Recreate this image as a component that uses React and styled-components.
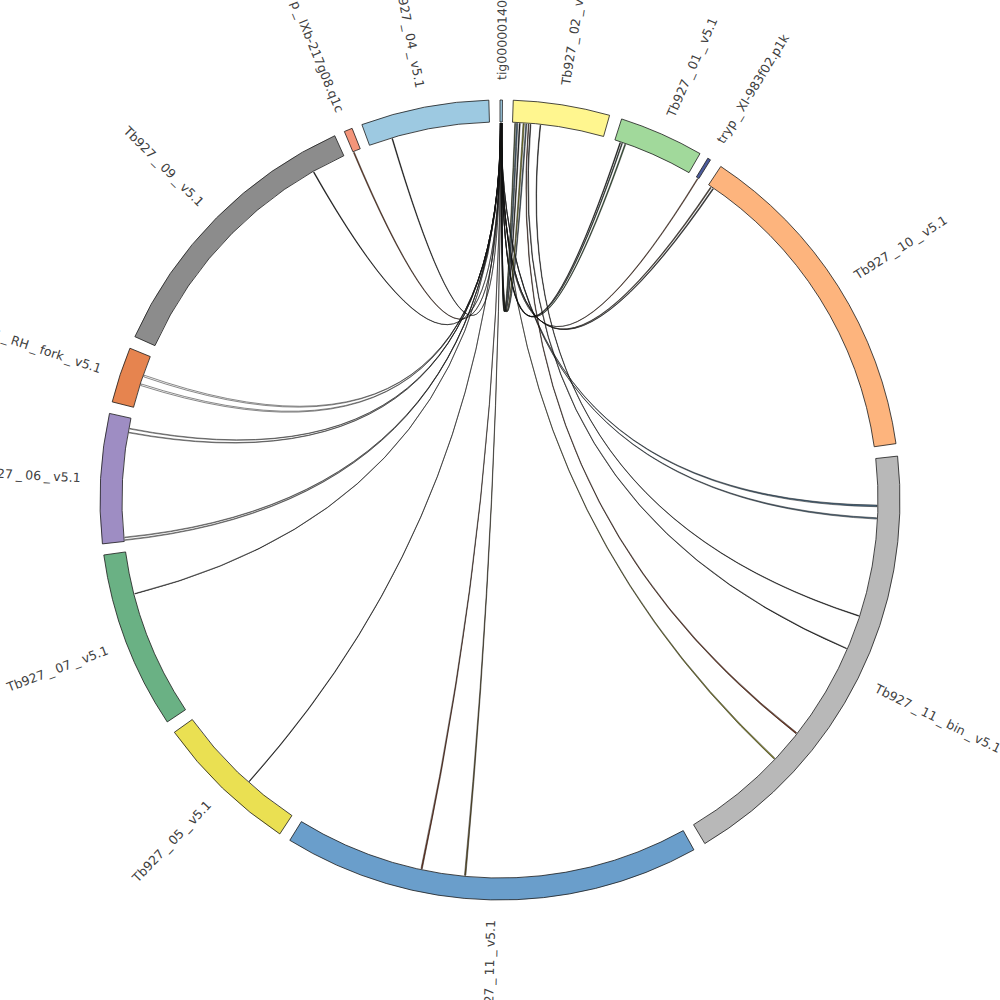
import React from 'react';
import styled, { createGlobalStyle } from 'styled-components';

// circle geometry
const CX = 500;
const CY = 500;
const R_OUT = 400;
const R_IN = 378;
const R_LINK = 377;
const R_LABEL = 420;

const GlobalStyle = createGlobalStyle`
  html, body {
    margin: 0;
    padding: 0;
    background: #ffffff;
  }
`;

const Page = styled.main`
  width: 1000px;
  height: 1000px;
  display: flex;
  align-items: center;
  justify-content: center;
  background: #ffffff;
  overflow: hidden;
`;

const Chart = styled.svg`
  display: block;
  width: 1000px;
  height: 1000px;
`;

const Sector = styled.path`
  fill: ${p => p.$fill};
  stroke: #1a1a1a;
  stroke-width: 0.8;
`;

const Link = styled.path`
  fill: ${p => p.$fill};
  stroke: #111111;
  stroke-width: 0.5;
`;

const Label = styled.text`
  font-family: "DejaVu Sans", "Liberation Sans", sans-serif;
  font-size: 12.5px;
  fill: #404040;
  dominant-baseline: central;
  text-anchor: ${p => (p.$end ? 'end' : 'start')};
`;

// sectors: name, start angle, end angle (degrees clockwise from top), colour
const sectors = [
  { name: 'tig00000140', a1: 0, a2: 0.35, color: '#9ecae1' },
  { name: 'Tb927_02_v5.1', a1: 1.9, a2: 15.9, color: '#fff68f' },
  { name: 'Tb927_01_v5.1', a1: 17.7, a2: 30.0, color: '#a1d99b' },
  { name: 'tryp_XI-983f02.p1k', a1: 31.3, a2: 31.75, color: '#4c5c9c' },
  { name: 'Tb927_10_v5.1', a1: 33.5, a2: 81.9, color: '#fdb47d' },
  { name: 'Tb927_11_bin_v5.1', a1: 83.7, a2: 149.2, color: '#b8b8b8' },
  { name: 'Tb927_11_v5.1', a1: 151.0, a2: 211.7, color: '#6a9ecb' },
  { name: 'Tb927_05_v5.1', a1: 213.4, a2: 234.5, color: '#eae052' },
  { name: 'Tb927_07_v5.1', a1: 236.3, a2: 262.1, color: '#6ab184' },
  { name: 'Tb927_06_v5.1', a1: 263.7, a2: 282.5, color: '#9e8dc3' },
  { name: 'Tb927_RH_fork_v5.1', a1: 284.2, a2: 292.3, color: '#e6844f' },
  { name: 'Tb927_09_v5.1', a1: 294.1, a2: 335.6, color: '#8c8c8c' },
  { name: 'tryp_IXb-217g08.q1c', a1: 337.1, a2: 338.3, color: '#f4957a' },
  { name: 'Tb927_04_v5.1', a1: 339.8, a2: 358.4, color: '#9dc9e1' },
];

// links leaving tig00000140: target angle, target width, fill
const tigLinks = [
  [343.4, 0.12, '#1a1a1a'],
  [337.2, 0.15, '#8b4a2b'],
  [330.4, 0.12, '#1a1a1a'],
  [289.2, 0.25, '#ffffff'],
  [287.8, 0.25, '#ffffff'],
  [280.9, 0.1, '#ffffff'],
  [280.3, 0.1, '#ffffff'],
  [264.3, 0.1, '#ffffff'],
  [263.9, 0.1, '#ffffff'],
  [255.6, 0.08, '#1a1a1a'],
  [221.7, 0.1, '#1a1a1a'],
  [192.0, 0.2, '#7a3a22'],
  [185.3, 0.2, '#6b5a2a'],
  [133.3, 0.2, '#8a8a2a'],
  [92.8, 0.2, '#5a7890'],
  [90.9, 0.25, '#4f6f88'],
  [34.4, 0.15, '#3a3a3a'],
  [34.0, 0.15, '#5a4a3a'],
  [31.6, 0.12, '#8b4a2b'],
  [19.4, 0.15, '#3d6b3d'],
  [18.9, 0.12, '#2e4a3a'],
  [18.6, 0.12, '#1a1a1a'],
  [4.0, 0.15, '#4a6a80'],
  [3.6, 0.2, '#8a8a2a'],
  [3.0, 0.15, '#1a1a1a'],
  [2.6, 0.2, '#4a6a80'],
  [2.3, 0.12, '#556b2f'],
];

// links leaving the start of Tb927_02
const chr2Links = [
  [4.3, 128.2, 0.2, '#7a3a22'],
  [4.6, 113.2, 0.1, '#1a1a1a'],
  [6.1, 107.9, 0.1, '#1a1a1a'],
];

const pt = (a, r) => {
  const t = (a * Math.PI) / 180;
  return [CX + r * Math.sin(t), CY - r * Math.cos(t)];
};

const f = n => n.toFixed(2);

const sectorPath = (a1, a2) => {
  const [x1, y1] = pt(a1, R_OUT);
  const [x2, y2] = pt(a2, R_OUT);
  const [x3, y3] = pt(a2, R_IN);
  const [x4, y4] = pt(a1, R_IN);
  const large = a2 - a1 > 180 ? 1 : 0;
  return `M${f(x1)} ${f(y1)}A${R_OUT} ${R_OUT} 0 ${large} 1 ${f(x2)} ${f(y2)}` +
    `L${f(x3)} ${f(y3)}A${R_IN} ${R_IN} 0 ${large} 0 ${f(x4)} ${f(y4)}Z`;
};

// ribbon between two small arcs, bent through the centre
const ribbonPath = (s1, s2, t1, t2) => {
  const r = R_LINK;
  const [a, b] = pt(s1, r);
  const [c, d] = pt(s2, r);
  const [e, g] = pt(t1, r);
  const [h, k] = pt(t2, r);
  return `M${f(a)} ${f(b)}A${r} ${r} 0 0 1 ${f(c)} ${f(d)}` +
    `Q${CX} ${CY} ${f(e)} ${f(g)}A${r} ${r} 0 0 1 ${f(h)} ${f(k)}` +
    `Q${CX} ${CY} ${f(a)} ${f(b)}Z`;
};

const buildLinks = () => {
  const out = [];
  const step = 0.3 / tigLinks.length;
  tigLinks.forEach(([t, w, fill], i) => {
    const s = 0.03 + i * step;
    out.push({ d: ribbonPath(s, s + step * 0.7, t - w / 2, t + w / 2), fill });
  });
  chr2Links.forEach(([s, t, w, fill]) => {
    out.push({ d: ribbonPath(s, s + 0.1, t - w / 2, t + w / 2), fill });
  });
  return out;
};

const LabelText = ({ name }) =>
  name.split('_').map((part, i) => (
    <React.Fragment key={i}>
      {i > 0 && <tspan dx={3}>_</tspan>}
      <tspan dx={i > 0 ? 3 : 0}>{part}</tspan>
    </React.Fragment>
  ));

const SectorLabel = ({ name, a1, a2 }) => {
  const mid = (a1 + a2) / 2;
  const [x, y] = pt(mid, R_LABEL);
  const left = mid >= 180;
  const rot = left ? mid - 270 : mid - 90;
  return (
    <Label $end={left} transform={`translate(${f(x)} ${f(y)}) rotate(${f(rot)})`}>
      <LabelText name={name} />
    </Label>
  );
};

export default function App() {
  const links = buildLinks();
  return (
    <>
      <GlobalStyle />
      <Page>
        <Chart viewBox="0 0 1000 1000">
          <g>
            {links.map((l, i) => (
              <Link key={i} d={l.d} $fill={l.fill} />
            ))}
          </g>
          <g>
            {sectors.map(s => (
              <Sector key={s.name} d={sectorPath(s.a1, s.a2)} $fill={s.color} />
            ))}
          </g>
          <g>
            {sectors.map(s => (
              <SectorLabel key={s.name} {...s} />
            ))}
          </g>
        </Chart>
      </Page>
    </>
  );
}
